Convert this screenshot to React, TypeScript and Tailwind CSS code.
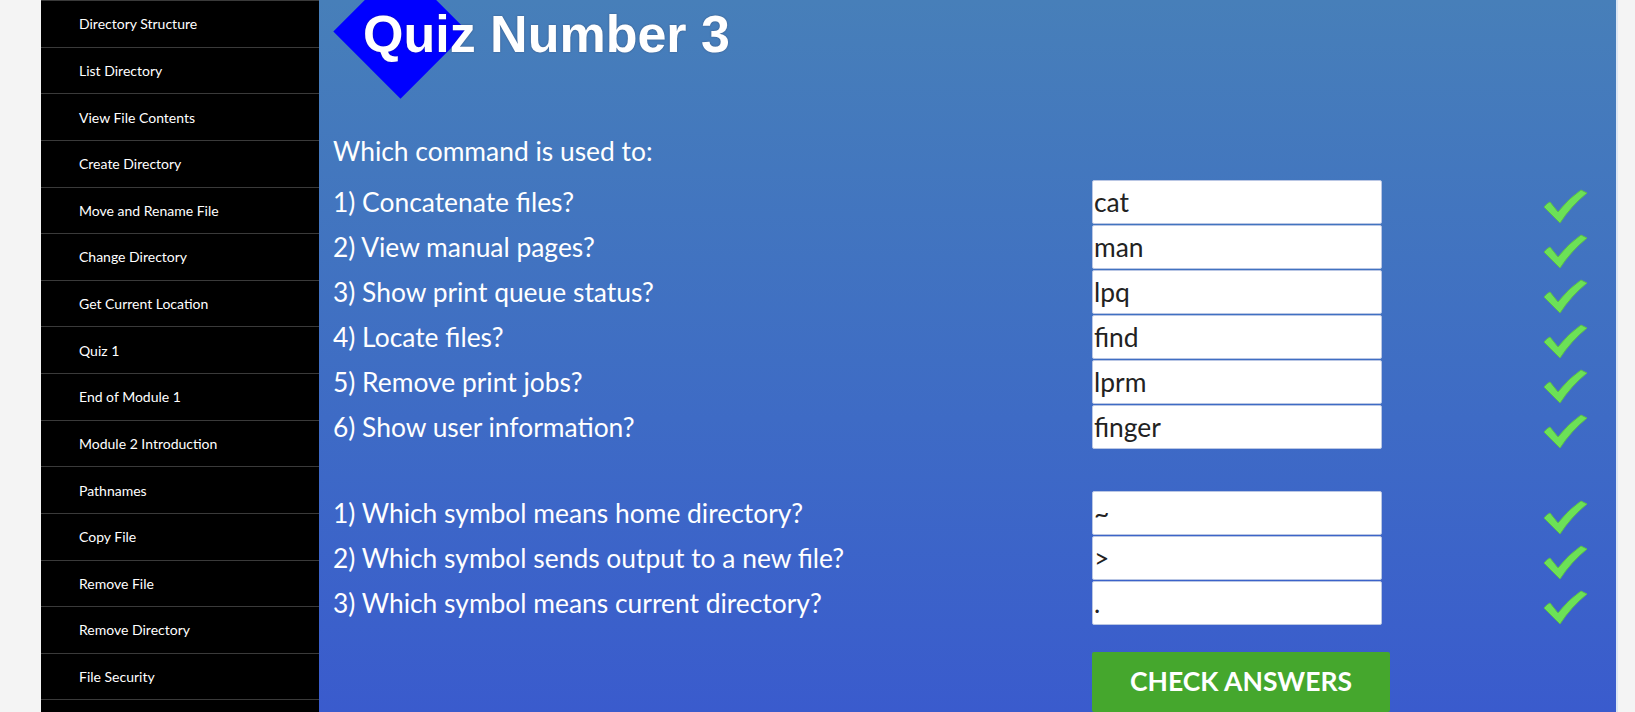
import React from 'react';

const menu = [
  'Directory Structure',
  'List Directory',
  'View File Contents',
  'Create Directory',
  'Move and Rename File',
  'Change Directory',
  'Get Current Location',
  'Quiz 1',
  'End of Module 1',
  'Module 2 Introduction',
  'Pathnames',
  'Copy File',
  'Remove File',
  'Remove Directory',
  'File Security',
  '',
];

const commands = [
  { q: '1) Concatenate files?', a: 'cat' },
  { q: '2) View manual pages?', a: 'man' },
  { q: '3) Show print queue status?', a: 'lpq' },
  { q: '4) Locate files?', a: 'find' },
  { q: '5) Remove print jobs?', a: 'lprm' },
  { q: '6) Show user information?', a: 'finger' },
];

const symbols = [
  { q: '1) Which symbol means home directory?', a: '~' },
  { q: '2) Which symbol sends output to a new file?', a: '>' },
  { q: '3) Which symbol means current directory?', a: '.' },
];

const Tick = () => (
  <svg width="45" height="37" viewBox="0 0 45 37" className="mt-[7px]">
    <path
      d="M1 20 Q4 16 7 15 L15 25 Q25 12 38 3 L44 6 Q28 19 17 36 Z"
      fill="#6ce157"
      stroke="#5bbf4a"
      strokeWidth="1"
      strokeLinejoin="round"
    />
  </svg>
);

const Row = ({ q, a }: { q: string; a: string }) => (
  <div className="flex h-[45px] items-start">
    <div className="w-[759px] leading-[44px] text-[26.4px] text-white">{q}</div>
    <input
      readOnly
      value={a}
      className="h-[44px] w-[290px] rounded-[2px] border border-[#b9c6e4] bg-white pl-[1px] text-[26.4px] leading-[44px] text-[#222] outline-none"
    />
    <div className="ml-[161px]">
      <Tick />
    </div>
  </div>
);

export default function App() {
  return (
    <div className="flex h-[712px] w-full overflow-hidden bg-[#f4f4f4] font-['Lato','Liberation_Sans',sans-serif]">
      <div className="w-[41px] shrink-0" />

      {/* side menu */}
      <nav className="w-[278px] shrink-0 border-t border-[#3a3a3a] bg-black">
        {menu.map((m, i) => (
          <div
            key={i}
            className="flex h-[46.64px] items-center border-b border-[#3a3a3a] pl-[38px] text-[14px] text-white"
          >
            {m}
          </div>
        ))}
      </nav>

      {/* quiz */}
      <main className="relative w-[1297px] shrink-0 overflow-hidden bg-gradient-to-b from-[#477fb9] to-[#3a5bcd] pl-[14px]">
        <div className="absolute left-[34px] top-[-16px] h-[95px] w-[95px] rotate-45 bg-[#0000ff]" />
        <div className="relative h-[129px]">
          <h1 className="ml-[30px] pt-[8px] font-['Liberation_Sans',Arial,sans-serif] text-[52px] font-bold leading-[52px] text-white [text-shadow:0_0_2px_rgba(40,40,60,0.45)]">
            Quiz Number 3
          </h1>
        </div>

        <div className="h-[44px] text-[26.4px] leading-[44px] text-white">Which command is used to:</div>

        <div className="mt-[7px]">
          {commands.map((r) => (
            <Row key={r.a} q={r.q} a={r.a} />
          ))}
        </div>

        <div className="mt-[41px]">
          {symbols.map((r) => (
            <Row key={r.q} q={r.q} a={r.a} />
          ))}
        </div>

        <button className="ml-[759px] mt-[26px] h-[60px] w-[298px] rounded-[2px] bg-[#45a72d] text-[26.5px] font-bold uppercase text-white">
          Check Answers
        </button>
      </main>
      <div className="w-[2px] shrink-0 bg-[#dce6f3]" />
    </div>
  );
}
